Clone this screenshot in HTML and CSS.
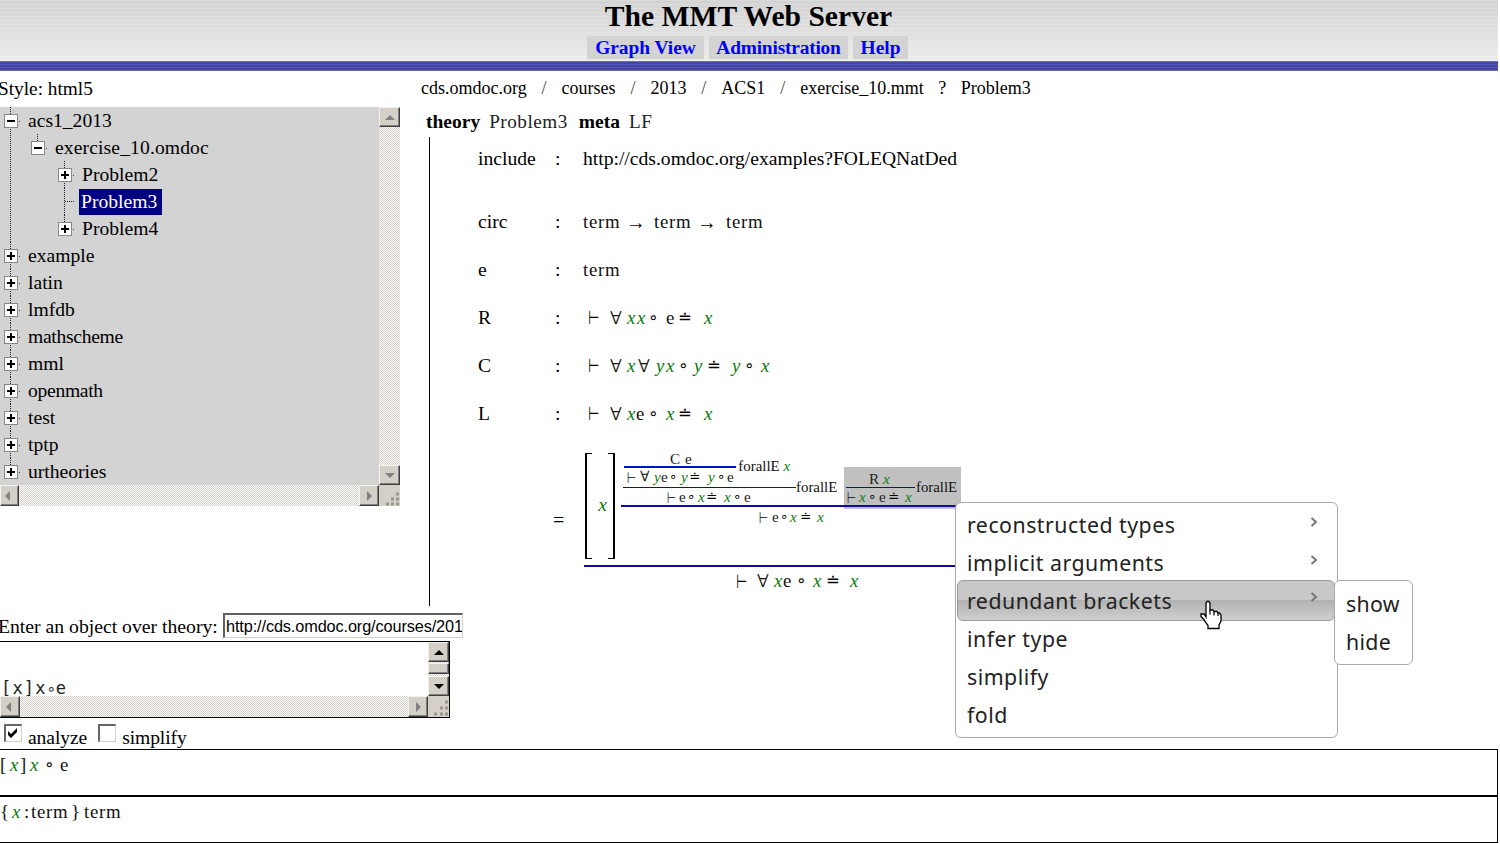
FILE: index.html
```html
<!DOCTYPE html>
<html lang="en">
<head>
<meta charset="utf-8">
<title>The MMT Web Server</title>
<link rel="stylesheet" href="styles.css">
</head>
<body>
<header class="top">
  <h1>The MMT Web Server</h1>
  <nav class="nav"><a class="n1">Graph View</a><a class="n2">Administration</a><a class="n3">Help</a></nav>
</header>
<main class="main">
  <aside class="side">
    <div class="style-line">Style: html5</div>
    <div class="pane">
      <ul class="tree">
        <li><div class="row"><i class="tg minus"></i><span>acs1_2013</span></div>
          <ul>
            <li><div class="row"><i class="tg minus"></i><span class="file">exercise_10.omdoc</span></div>
              <ul>
                <li><div class="row"><i class="tg"></i><span>Problem2</span></div></li>
                <li><div class="row"><i class="leaf"></i><span class="sel">Problem3</span></div></li>
                <li><div class="row"><i class="tg"></i><span>Problem4</span></div></li>
              </ul>
            </li>
          </ul>
        </li>
        <li><div class="row"><i class="tg"></i><span>example</span></div></li>
        <li><div class="row"><i class="tg"></i><span>latin</span></div></li>
        <li><div class="row"><i class="tg"></i><span>lmfdb</span></div></li>
        <li><div class="row"><i class="tg"></i><span class="narrow">mathscheme</span></div></li>
        <li><div class="row"><i class="tg"></i><span>mml</span></div></li>
        <li><div class="row"><i class="tg"></i><span class="narrow">openmath</span></div></li>
        <li><div class="row"><i class="tg"></i><span>test</span></div></li>
        <li><div class="row"><i class="tg"></i><span>tptp</span></div></li>
        <li><div class="row"><i class="tg"></i><span>urtheories</span></div></li>
      </ul>
      <div class="vbar"><b class="btn up off"></b><b class="btn down off"></b></div>
      <div class="hbar"><b class="btn left off"></b><b class="btn right off"></b></div>
      <div class="grip"><svg width="21" height="21"><path d="M17 9h3M12 14h3M17 14h3M7 19h3M12 19h3M17 19h3" stroke="#9a968e" stroke-width="3"/></svg></div>
    </div>
  </aside>
  <section class="content">
    <div class="crumbs"><span>cds.omdoc.org</span><em>/</em><span>courses</span><em>/</em><span>2013</span><em>/</em><span>ACS1</span><em>/</em><span>exercise_10.mmt</span><em class="q">?</em><span>Problem3</span></div>
    <div class="theory"><b>theory</b><span class="lt">Problem3</span><b>meta</b><span class="lt">LF</span></div>
    <div class="body">
      <div class="decl inc"><span>include</span><span>:</span><span>http://cds.omdoc.org/examples?FOLEQNatDed</span></div>
      <div class="decl circ"><span>circ</span><span>:</span><div class="f f-circ m"><span>term</span><u>→</u><span>term</span><u>→</u><span>term</span></div></div>
      <div class="decl"><span>e</span><span>:</span><div class="m">term</div></div>
      <div class="decl"><span>R</span><span>:</span><div class="f f-r m"><u class="t">⊢</u><u class="a">∀</u><i>x</i><i>x</i><u>∘</u><span>e</span><u>≐</u><i>x</i></div></div>
      <div class="decl"><span>C</span><span>:</span><div class="f f-c m"><u class="t">⊢</u><u class="a">∀</u><i>x</i><u class="a">∀</u><i>y</i><i>x</i><u>∘</u><i>y</i><u>≐</u><i>y</i><u>∘</u><i>x</i></div></div>
      <div class="decl"><span>L</span><span>:</span><div class="f f-l m"><u class="t">⊢</u><u class="a">∀</u><i>x</i><span>e</span><u>∘</u><i>x</i><u>≐</u><i>x</i></div></div>
      <div class="def">
        <span class="eq">=</span>
        <div class="proof">
          <div class="abs">
            <div class="brk"><i>x</i></div>
            <div class="inner">
              <div class="prem">
                <div class="d1">
                  <div class="d1f">
                    <div class="d0">
                      <div class="d0f"><div class="f f-ce"><span>C</span><span>e</span></div><div class="f f-1"><u class="t">⊢</u><u class="a">∀</u><i>y</i><span>e</span><u>∘</u><i>y</i><u>≐</u><i>y</i><u>∘</u><span>e</span></div></div>
                      <div class="rule r0">forallE&nbsp;<i>x</i></div>
                    </div>
                    <div class="f f-2"><u class="t">⊢</u><span>e</span><u>∘</u><i>x</i><u>≐</u><i>x</i><u>∘</u><span>e</span></div>
                  </div>
                  <div class="rule r1">forallE</div>
                </div>
                <div class="d2">
                  <div class="d2f"><div class="f f-rx"><span>R</span><i>x</i></div><div class="f f-3"><u class="t">⊢</u><i>x</i><u>∘</u><span>e</span><u>≐</u><i>x</i></div></div>
                  <div class="rule r2">forallE</div>
                </div>
              </div>
              <div class="f f-4"><u class="t">⊢</u><span>e</span><u>∘</u><i>x</i><u>≐</u><i>x</i></div>
            </div>
          </div>
          <div class="f f-5 m"><u class="t">⊢</u><u class="a">∀</u><i>x</i><span>e</span><u>∘</u><i>x</i><u>≐</u><i>x</i></div>
        </div>
      </div>
    </div>
  </section>
</main>
<section class="query">
  <div class="ask"><label>Enter an object over theory:</label><div class="field"><span>http://cds.omdoc.org/courses/201</span></div></div>
  <div class="area">
    <div class="code">[x]x<small>∘</small>e</div>
    <div class="vbar"><b class="btn up"></b><b class="btn thumb"></b><b class="btn down"></b></div>
    <div class="hbar"><b class="btn left off"></b><b class="btn right off"></b></div>
    <div class="grip"><svg width="21" height="21"><path d="M17 6h3M12 12h3M17 12h3M6 18h3M12 18h3M17 18h3" stroke="#9a968e" stroke-width="3"/></svg></div>
  </div>
  <div class="checks">
    <span class="box"><svg width="16" height="16"><path d="M2 5v4l3 3 6-6V2L5 8z" fill="#000"/></svg></span><label class="c1">analyze</label>
    <span class="box"></span><label>simplify</label>
  </div>
</section>
<section class="result m"><div class="f f-6"><span>[</span><i>x</i><span>]</span><i>x</i><u>∘</u><span>e</span></div></section>
<section class="result m"><div class="f f-7"><span>{</span><i>x</i><span>:</span><span>term</span><span>}</span><span>term</span></div></section>

<div class="menu main-menu">
  <div class="item">reconstructed types<svg width="8" height="12"><path d="M1.500 2l4.500 4-4.500 4"/></svg></div>
  <div class="item">implicit arguments<svg width="8" height="12"><path d="M1.500 2l4.500 4-4.500 4"/></svg></div>
  <div class="item hot">redundant brackets<svg width="8" height="12"><path d="M1.500 2l4.500 4-4.500 4"/></svg></div>
  <div class="item">infer type</div>
  <div class="item">simplify</div>
  <div class="item">fold</div>
</div>
<div class="menu sub-menu"><div class="item">show</div><div class="item">hide</div></div>
<svg class="cursor" width="24" height="30" viewBox="0 0 24 30"><path d="M7 17V3l1-1.500h2L11 3v7h3l1 1.500h3l1 1.500h1.500l1.500 2v6l-2 4v3.500H9v-3l-3-4-1-2-3-3V14h3z" fill="#fff" stroke="#000" stroke-width="1.300"/><path d="M11 9.500v5M15 11.500v4M19 13v3" stroke="#000" stroke-width="1.200"/></svg>
</body>
</html>
```
FILE: styles.css
```css
* { box-sizing: border-box; }
body { margin: 0; width: 1498px; height: 844px; position: relative; overflow: hidden; background: #fff; color: #000; font-family: "Liberation Serif", serif; font-size: 19.6px; line-height: 27px; white-space: nowrap; }
html { background: #fff; }
ul { list-style: none; margin: 0; padding: 0; }
u { text-decoration: none; }

.top { height: 71px; padding-right: 3px; border-bottom: 10px solid #4448a4; background: repeating-linear-gradient(rgba(255,255,255,.14) 0 1px, transparent 1px 4px), linear-gradient(#d3d3d3, #ececec); position: relative; }
.top::after { content: ""; position: absolute; left: 0; right: 0; bottom: -10px; height: 10px; background: linear-gradient(#6c6eb4 0 1px, #4347a1 1px 3px, #5559b4 3px 4px, #4347a1 4px 6px, #5256ae 6px 7px, #4347a1 7px 9px, #6568ae 9px); }
h1 { margin: 0 -2px 0 0; font-size: 29.600px; line-height: 32px; height: 36px; text-align: center; }
.nav { display: flex; justify-content: center; gap: 5px; font-weight: bold; color: #00f; font-size: 19.400px; line-height: 24px; }
.nav a { height: 23px; background: #d3d3d3; text-align: center; }
.n1 { width: 117px; } .n2 { width: 139px; letter-spacing: -.2px; } .n3 { width: 55px; }

.main { display: flex; height: 535px; }
.side { width: 421px; }
.style-line { height: 36px; line-height: 36px; margin-left: -2px; font-size: 19.300px; }
.pane { width: 400px; height: 399px; display: grid; grid-template: 378px 21px / 379px 21px; background: #d3d3d3; }
.tree { overflow: hidden; }
.tree li { position: relative; }
.tree li::before { content: ""; position: absolute; left: 10px; top: 0; bottom: 0; width: 1px; background: repeating-linear-gradient(#222 0 1px, transparent 1px 2px); }
.tree li:last-child::before { bottom: auto; height: 14px; }
.tree li li { margin-left: 27px; }
.row { height: 27px; display: flex; align-items: center; line-height: 27px; }
.file { letter-spacing: .12px; }
.narrow { letter-spacing: -.3px; }
.tg { position: relative; width: 14px; height: 14px; margin: 1px 10px 0 4px; background: linear-gradient(#000, #000) center / 8px 2px no-repeat, linear-gradient(#000, #000) center / 2px 8px no-repeat, #fff; border: 1px solid #888; }
.tg::after { content: ""; position: absolute; left: 14px; top: 6px; width: 1px; height: 1px; background: #444; }
.tg.minus { background: linear-gradient(#000, #000) center / 8px 2px no-repeat, #fff; }
.leaf { flex: none; width: 10px; height: 1px; margin: 0 4px 0 11px; background: repeating-linear-gradient(90deg, #222 0 1px, transparent 1px 2px); }
.sel { background: #000080; color: #fff; height: 26px; line-height: 26px; width: 83px; padding-left: 2px; }

.vbar, .hbar { display: flex; justify-content: space-between; background: repeating-conic-gradient(#fff 0 25%, #d4d0c8 0 50%) 0 0 / 2px 2px; }
.vbar { flex-direction: column; }
.btn { display: flex; align-items: center; justify-content: center; width: 20px; height: 20px; background: #d4d0c8; border: 1px solid; border-color: #f4f2ee #404040 #404040 #f4f2ee; box-shadow: inset -1px -1px #808080; }
.vbar .btn { width: 21px; }
.btn::before { content: ""; border: 5px solid transparent; }
.up::before { border-bottom-color: #000; border-top: 0; }
.down::before { border-top-color: #000; border-bottom: 0; }
.left::before { border-right-color: #000; border-left: 0; }
.right::before { border-left-color: #000; border-right: 0; }
.off.up::before { border-bottom-color: #808080; }
.off.down::before { border-top-color: #808080; }
.off.left::before { border-right-color: #808080; margin-right: 4px; }
.off.right::before { border-left-color: #808080; }
.hbar .btn { height: 21px; }
.hbar .left { width: 19px; }
.btn.thumb { height: 11px; }
.thumb::before { display: none; }
.grip { background: #d4d0c8; }
.grip svg { display: block; }

.crumbs { display: flex; height: 36px; line-height: 35px; font-size: 18px; }
.crumbs em { font-style: normal; text-align: center; width: 34.900px; color: #444; }
.crumbs .q { width: 37px; color: #000; }
.theory { display: flex; height: 30px; line-height: 30px; padding-left: 5px; font-size: 19.500px; }
.theory b { margin-right: 9px; }
.lt { color: #222; font-size: 19.200px; margin-right: 11px; letter-spacing: .5px; }
.body { margin-left: 8px; border-left: 1px solid #000; height: 469px; padding-top: 6px; }
.decl { display: grid; grid-template-columns: 77px 28px auto; padding-left: 48px; height: 48px; line-height: 32px; }
.decl.inc { height: 63px; }
.m { color: #111; font-size: 18.800px; letter-spacing: .7px; }
.f { display: grid; }
.f > * { width: 0; }
.f i, .brk i, .rule i { color: #0a7a0a; letter-spacing: 0; }
.f u { font-family: "DejaVu Sans", sans-serif; font-size: .88em; letter-spacing: 0; color: #000; }
.f u.a { font-size: .92em; font-weight: 200; -webkit-text-stroke: .3px #000; }
.f u.t { transform: translate(1px, 1px) scale(.78, 1.150); transform-origin: 0 50%; height: 100%; }
.f-circ { grid-template-columns: 43px 28px 43px 29px 40px; }
.f.f-circ u { font-size: 1.050em; font-family: "Liberation Serif", serif; }
.f-r, .f-c, .f-l { margin-left: 4px; }
.f-r { grid-template-columns: 23px 17px 10px 11px 18px 12px 26px 10px; }
.f-c { grid-template-columns: 23px 17px 11px 18px 10px 12px 16px 13px 25px 12px 17px 10px; }
.f-l { grid-template-columns: 23px 17px 9px 12px 18px 12px 26px 10px; }

.def { display: flex; padding-left: 123px; height: 150px; }
.eq { width: 31px; padding-top: 61px; font-size: 20px; }
.proof { width: 382px; padding-top: 5px; }
.abs { display: flex; height: 116px; border-bottom: 2px solid #1109a0; }
.brk { width: 30px; height: 106px; margin: 2px 7px 0 1px; text-align: center; padding: 38px 0 0 5px; font-size: 19.500px; background: linear-gradient(#000,#000) 0 0/2px 100%, linear-gradient(#000,#000) 100% 0/2px 100%, linear-gradient(#000,#000) 0 0/7px 1px, linear-gradient(#000,#000) 100% 0/7px 1px, linear-gradient(#000,#000) 0 100%/7px 1px, linear-gradient(#000,#000) 100% 100%/7px 1px; background-repeat: no-repeat; }
.inner { width: 344px; font-size: 15.200px; }
.inner .f { color: #222; }
.prem { position: relative; display: flex; height: 56px; }
.prem::after { content: ""; position: absolute; left: -1px; right: 0; bottom: 0; height: 2px; background: #1109a0; }
.d1 { display: flex; width: 222px; }
.d1f { width: 173px; margin-left: 1px; }
.d0 { display: flex; height: 37px; border-bottom: 1px solid #1109c0; }
.d0f { width: 113px; margin-left: 1px; }
.f-ce { grid-template-columns: 15px 8px; padding-left: 46px; height: 17px; line-height: 16px; border-bottom: 2px solid #0010d0; }
.f-1 { grid-template-columns: 14px 14px 7px 8px 12px 8px 19px 9px 10px 8px; padding-left: 2px; line-height: 17px; }
.f-2 { grid-template-columns: 13px 8px 11px 8px 18px 9px 11px 8px; padding-left: 43px; line-height: 18px; }
.rule { line-height: 18px; color: #111; }
.r0 { padding: 6px 0 0 2px; width: 60px; font-size: 14.900px; }
.r1 { padding: 27px 0 0; font-size: 14.900px; }
.d2 { display: flex; width: 117px; height: 42px; margin-top: 16px; background: linear-gradient(#c0c0c0 39px, #c0c0e8 0); }
.d2f { width: 69px; margin-left: 2px; }
.f-rx { height: 21px; border-bottom: 1px solid #1109c0; padding: 4px 0 0 23px; grid-template-columns: 14px 8px; line-height: 16px; }
.f-3 { line-height: 18px; grid-template-columns: 13px 9px 11px 9px 17px 8px; padding-left: 0; }
.r2 { padding: 11px 0 0 1px; font-size: 14.800px; }
.f-4 { line-height: 20px; grid-template-columns: 14px 8px 10px 10px 17px 8px; padding-left: 136px; }
.f-5 { line-height: 28px; grid-template-columns: 22px 17px 9px 13px 17px 13px 24px 10px; padding-left: 151px; }

.query { height: 143px; padding-top: 7px; }
.ask { display: flex; height: 28px; line-height: 26px; }
.ask label { width: 225px; margin-left: -2px; font-size: 19.700px; }
.field { width: 240px; height: 25px; border: 1px solid #d4d0c8; border-top: 2px solid #606060; border-left: 2px solid #606060; font: 16.300px/22px "Liberation Sans", sans-serif; letter-spacing: -.12px; padding-left: 1px; overflow: hidden; }
.area { width: 450px; height: 77px; border: 1px solid #000; border-left: 0; display: grid; grid-template: 54px 21px / 428px 21px; }
.area .vbar { justify-content: flex-start; }
.area .thumb { margin: 1px 0 2px; }
.area .left { width: 20px; }
.code { overflow: hidden; padding: 34px 0 0 1px; font: 17px/24px "DejaVu Sans Mono", monospace; color: #222; letter-spacing: 1.200px; }
.code small { font-size: 15px; letter-spacing: 0; }
.checks { display: flex; height: 31px; padding-left: 4px; }
.checks label { padding-top: 6px; margin: 0 11px 0 6px; letter-spacing: -.1px; }
.box { width: 18px; height: 18px; margin-top: 6px; border: 1px solid #d4d0c8; border-top: 2px solid #666; border-left: 2px solid #666; }
.box svg { display: block; }
.result { height: 47px; border: 1px solid #000; border-left: 0; line-height: 30px; }
.f-6 { grid-template-columns: 10px 10px 10px 14px 16px 10px; }
.f-7 { grid-template-columns: 12px 12px 7px 40px 13px 40px; }

.menu { position: absolute; background: #fff; border: 1px solid #aaa; border-radius: 6px; color: #222; font: 21.300px/38px "Noto Sans", sans-serif; letter-spacing: .5px; }
.main-menu { left: 955px; top: 502px; width: 383px; height: 236px; padding: 3px 2px; }
.item { position: relative; height: 38px; padding-left: 9px; }
.item svg { position: absolute; left: 352px; top: 10px; fill: none; stroke: #777; stroke-width: 2; }
.hot { height: 41px; margin: -2px -1px -1px; padding-left: 9px; line-height: 39px; border: 1px solid #999; border-radius: 6px; background: linear-gradient(#c8c8c8 0 49%, #b2b2b2 50%, #cfcfcf); width: 378px; }
.sub-menu { left: 1334px; top: 580px; width: 79px; height: 85px; padding: 4px 2px; letter-spacing: .3px; }
.cursor { position: absolute; left: 1199px; top: 600px; }
```
